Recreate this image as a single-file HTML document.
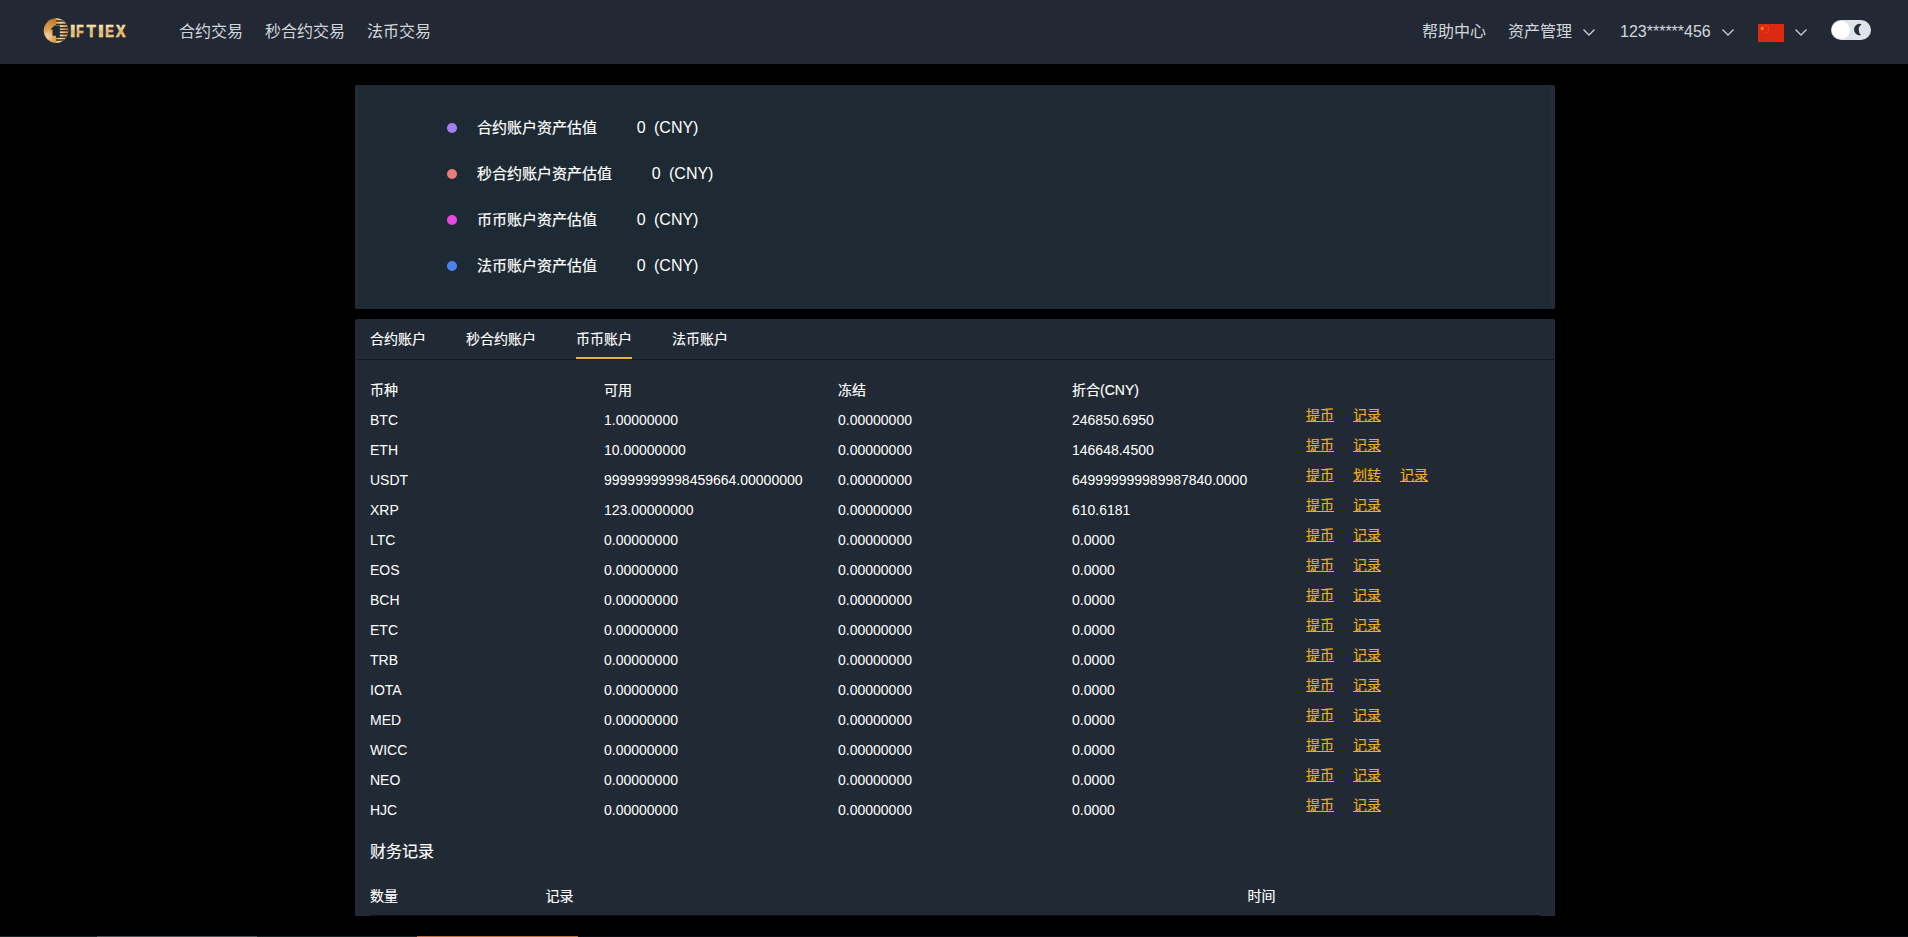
<!DOCTYPE html>
<html lang="zh-CN">
<head>
<meta charset="utf-8">
<title>资产管理</title>
<style>
*{margin:0;padding:0;box-sizing:border-box;}
html,body{width:1908px;height:937px;overflow:hidden;background:#000;}
body{font-family:"Liberation Sans","Noto Sans CJK SC",sans-serif;color:#fff;position:relative;font-size:14px;}
.header{position:absolute;left:0;top:0;width:1908px;height:64px;background:#222934;}
.header .it{position:absolute;top:0;height:64px;line-height:64px;font-size:16px;color:#d3d7dc;white-space:nowrap;}
.logo{position:absolute;left:43px;top:17px;width:26px;height:27px;}
.logotxt{position:absolute;left:68px;top:20px;width:62px;height:22px;overflow:visible;}
.chev{position:absolute;top:28px;width:14px;height:9px;}
.flag{position:absolute;left:1758px;top:24px;width:26px;height:18px;}
.toggle{position:absolute;left:1831px;top:20px;width:40px;height:20px;border-radius:10px;background:#dfe3ea;}
.toggle .knob{position:absolute;left:1px;top:1px;width:18px;height:18px;border-radius:50%;background:#fff;}
.toggle svg{position:absolute;left:0;top:0;width:40px;height:20px;}
.p1{position:absolute;left:355px;top:85px;width:1200px;height:224px;background:#1e2a33;border-radius:2px;box-shadow:inset 3px 0 0 #232b35,inset -4px 0 0 #242c36;}
.p1 .r{position:absolute;left:0;height:46px;line-height:46px;font-size:15px;color:#fff;white-space:nowrap;}
.p1 .dot{position:absolute;left:92px;width:10px;height:10px;border-radius:50%;}
.p1 .lab{position:absolute;left:122px;}
.p1 .lab.cny{font-size:16px;top:-0.2px;-webkit-text-stroke:0;}
.p2{position:absolute;left:355px;top:319px;width:1200px;height:597px;background:#212a34;border-radius:2px 2px 0 0;}
.tabs{position:absolute;left:0;top:0;width:1200px;height:41px;border-bottom:1px solid #141a21;}
.tabs span{position:absolute;top:0;height:40px;line-height:40px;font-size:14px;color:#fff;white-space:nowrap;}
.tabs span.on{border-bottom:2px solid #e8b33c;}
table{border-collapse:collapse;table-layout:fixed;position:absolute;left:15px;width:1170px;}
td,th{height:30px;line-height:30px;font-size:14px;font-weight:normal;text-align:left;padding:0;color:#fff;white-space:nowrap;overflow:visible;}
.t1{top:56px;}
td.ops{vertical-align:top;line-height:20px;}
td.ops a{display:inline-block;line-height:20px;margin-top:0px;margin-right:19px;color:#efae1e;text-decoration:underline;position:relative;top:0px;}
.h2{position:absolute;left:15px;top:517px;font-size:16px;line-height:32px;color:#fff;}
.t2{top:562px;}
.t2 th{height:34px;line-height:30px;border-bottom:1px solid #0b0e12;vertical-align:top;}
.tabs span,th,.h2,td.ops a{-webkit-text-stroke:0.15px currentColor;}
.p1 .lab{-webkit-text-stroke:0.2px currentColor;}
.p1 .lab.num{-webkit-text-stroke:0;}
.bot{position:absolute;left:0;top:936px;width:1908px;height:1px;background:#0a0d11;}
.bot i{position:absolute;top:0;height:1px;}
</style>
</head>
<body>
<div class="header">
  <svg class="logo" viewBox="43 17 26 27">
    <defs>
      <radialGradient id="g1" gradientUnits="userSpaceOnUse" cx="48" cy="36" r="17"><stop offset="0" stop-color="#f6d3a0"/><stop offset="0.4" stop-color="#e0a253"/><stop offset="1" stop-color="#c37a25"/></radialGradient>
      <linearGradient id="g2" gradientUnits="userSpaceOnUse" x1="56" y1="0" x2="68.5" y2="0"><stop offset="0" stop-color="#d9a85a"/><stop offset="0.4" stop-color="#efdcb0"/><stop offset="1" stop-color="#c4843a"/></linearGradient>
      <clipPath id="cc"><circle cx="56" cy="30.6" r="12.3"/></clipPath>
    </defs>
    <circle cx="56" cy="30.6" r="12.3" fill="url(#g1)"/>
    <g clip-path="url(#cc)">
      <rect x="56" y="17" width="13" height="27" fill="url(#g2)"/>
      <g fill="#241b0e" fill-opacity="0.9"><rect x="56" y="20.25" width="13" height="1.5"/><rect x="56" y="23.65" width="13" height="1.5"/><rect x="56" y="26.95" width="13" height="1.5"/><rect x="56" y="29.85" width="13" height="1.5"/><rect x="56" y="33.15" width="13" height="1.5"/><rect x="56" y="36.35" width="13" height="1.5"/><rect x="56" y="39.25" width="13" height="1.5"/></g>
      <path d="M50.7 28.9 L54.6 25.6 L59.8 25.6 L59.8 37.2 L56 37.2 L56 35.8 L52.5 35.8 L52.5 29.6 L50.7 29.6 Z" fill="#1f2a33"/>
    </g>
  </svg>
  <svg class="logotxt" viewBox="68 20 62 22"><defs><linearGradient id="g3" gradientUnits="userSpaceOnUse" x1="0" y1="-12.5" x2="0" y2="0.5"><stop offset="0" stop-color="#f8e3ad"/><stop offset="0.55" stop-color="#e3b265"/><stop offset="1" stop-color="#f3d695"/></linearGradient></defs><g font-family="Liberation Sans, sans-serif" font-weight="bold" font-size="17" fill="url(#g3)" stroke="url(#g3)" stroke-width="0.8" stroke-linejoin="miter"><text transform="translate(70.1,37.3) scale(1.136,0.93)">I</text><text transform="translate(76.36,37.3) scale(0.7,0.93)">F</text><text transform="translate(86.77,37.3) scale(0.87,0.93)">T</text><text transform="translate(98.03,37.3) scale(1.24,0.93)">I</text><text transform="translate(105.27,37.3) scale(0.755,0.93)">E</text><text transform="translate(115.97,37.3) scale(0.826,0.93)">X</text></g></svg>
  <div class="it" style="left:179px">合约交易</div>
  <div class="it" style="left:265px">秒合约交易</div>
  <div class="it" style="left:367px">法币交易</div>
  <div class="it" style="left:1422px">帮助中心</div>
  <div class="it" style="left:1508px">资产管理</div>
  <svg class="chev" style="left:1582px" viewBox="0 0 14 9"><path d="M1.5 1.5 L7 7 L12.5 1.5" fill="none" stroke="#c9ced6" stroke-width="1.3"/></svg>
  <div class="it" style="left:1620px">123******456</div>
  <svg class="chev" style="left:1721px" viewBox="0 0 14 9"><path d="M1.5 1.5 L7 7 L12.5 1.5" fill="none" stroke="#c9ced6" stroke-width="1.3"/></svg>
  <svg class="flag" viewBox="0 0 26 18"><rect width="26" height="18" fill="#dc2a10"/><polygon points="4.20,2.10 4.76,3.63 6.39,3.69 5.10,4.69 5.55,6.26 4.20,5.35 2.85,6.26 3.30,4.69 2.01,3.69 3.64,3.63" fill="#ffa733"/><g fill="#f5552c"><circle cx="8.3" cy="1.9" r="0.7"/><circle cx="10.4" cy="3.8" r="0.7"/><circle cx="10.4" cy="6.4" r="0.7"/><circle cx="8.3" cy="8.4" r="0.7"/></g></svg>
  <svg class="chev" style="left:1794px" viewBox="0 0 14 9"><path d="M1.5 1.5 L7 7 L12.5 1.5" fill="none" stroke="#c9ced6" stroke-width="1.3"/></svg>
  <div class="toggle"><div class="knob"></div><svg viewBox="0 0 40 20"><path d="M30.5 4.2 A5.64 5.64 0 1 0 30 15 A7 7 0 0 1 30.5 4.2 Z" fill="#2b2f3a"/></svg></div>
</div>

<div class="p1">
  <div class="r" style="top:20px"><i class="dot" style="top:18px;background:#a67ef0"></i><span class="lab">合约账户资产估值</span><span class="lab cny" style="left:281.7px">0</span><span class="lab cny" style="left:299px">(CNY)</span></div>
  <div class="r" style="top:66px"><i class="dot" style="top:18px;background:#ec7b7b"></i><span class="lab">秒合约账户资产估值</span><span class="lab cny" style="left:296.7px">0</span><span class="lab cny" style="left:314px">(CNY)</span></div>
  <div class="r" style="top:112px"><i class="dot" style="top:18px;background:#e847e0"></i><span class="lab">币币账户资产估值</span><span class="lab cny" style="left:281.7px">0</span><span class="lab cny" style="left:299px">(CNY)</span></div>
  <div class="r" style="top:158px"><i class="dot" style="top:18px;background:#4a82f0"></i><span class="lab">法币账户资产估值</span><span class="lab cny" style="left:281.7px">0</span><span class="lab cny" style="left:299px">(CNY)</span></div>
</div>

<div class="p2">
  <div class="tabs">
    <span style="left:15px">合约账户</span>
    <span style="left:111px">秒合约账户</span>
    <span class="on" style="left:221px">币币账户</span>
    <span style="left:317px">法币账户</span>
  </div>
  <table class="t1">
    <colgroup><col style="width:234px"><col style="width:234px"><col style="width:234px"><col style="width:234px"><col style="width:234px"></colgroup>
    <tr><th>币种</th><th>可用</th><th>冻结</th><th>折合(CNY)</th><th></th></tr>
<tr><td>BTC</td><td>1.00000000</td><td>0.00000000</td><td>246850.6950</td><td class="ops"><a>提币</a><a>记录</a></td></tr>
<tr><td>ETH</td><td>10.00000000</td><td>0.00000000</td><td>146648.4500</td><td class="ops"><a>提币</a><a>记录</a></td></tr>
<tr><td>USDT</td><td>99999999998459664.00000000</td><td>0.00000000</td><td>649999999989987840.0000</td><td class="ops"><a>提币</a><a>划转</a><a>记录</a></td></tr>
<tr><td>XRP</td><td>123.00000000</td><td>0.00000000</td><td>610.6181</td><td class="ops"><a>提币</a><a>记录</a></td></tr>
<tr><td>LTC</td><td>0.00000000</td><td>0.00000000</td><td>0.0000</td><td class="ops"><a>提币</a><a>记录</a></td></tr>
<tr><td>EOS</td><td>0.00000000</td><td>0.00000000</td><td>0.0000</td><td class="ops"><a>提币</a><a>记录</a></td></tr>
<tr><td>BCH</td><td>0.00000000</td><td>0.00000000</td><td>0.0000</td><td class="ops"><a>提币</a><a>记录</a></td></tr>
<tr><td>ETC</td><td>0.00000000</td><td>0.00000000</td><td>0.0000</td><td class="ops"><a>提币</a><a>记录</a></td></tr>
<tr><td>TRB</td><td>0.00000000</td><td>0.00000000</td><td>0.0000</td><td class="ops"><a>提币</a><a>记录</a></td></tr>
<tr><td>IOTA</td><td>0.00000000</td><td>0.00000000</td><td>0.0000</td><td class="ops"><a>提币</a><a>记录</a></td></tr>
<tr><td>MED</td><td>0.00000000</td><td>0.00000000</td><td>0.0000</td><td class="ops"><a>提币</a><a>记录</a></td></tr>
<tr><td>WICC</td><td>0.00000000</td><td>0.00000000</td><td>0.0000</td><td class="ops"><a>提币</a><a>记录</a></td></tr>
<tr><td>NEO</td><td>0.00000000</td><td>0.00000000</td><td>0.0000</td><td class="ops"><a>提币</a><a>记录</a></td></tr>
<tr><td>HJC</td><td>0.00000000</td><td>0.00000000</td><td>0.0000</td><td class="ops"><a>提币</a><a>记录</a></td></tr>
  </table>
  <div class="h2">财务记录</div>
  <table class="t2">
    <colgroup><col style="width:175.5px"><col style="width:702px"><col style="width:292.5px"></colgroup>
    <tr><th>数量</th><th>记录</th><th>时间</th></tr>
  </table>
</div>
<div class="bot"><i style="left:0;width:578px;background:#1b272b"></i><i style="left:97px;width:160px;background:#4c5458"></i><i style="left:417px;width:161px;background:#b97446"></i></div>
</body>
</html>
